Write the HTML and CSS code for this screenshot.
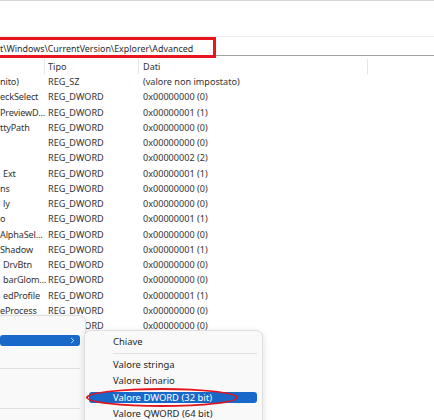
FILE: index.html
```html
<!DOCTYPE html>
<html lang="it">
<head>
<meta charset="utf-8">
<link rel="stylesheet" href="styles.css">
</head>
<body>
<div class="page">
  <div class="top"></div>
  <div class="addressbar">
    <div class="addr-box">t\Windows\CurrentVersion\Explorer\Advanced</div>
  </div>
  <div class="grid header">
    <div class="cell name"></div>
    <div class="cell">Tipo</div>
    <div class="cell data">Dati</div>
    <div class="cell"></div>
  </div>
  <div class="rows">
    <div class="grid row"><div class="cell name">nito)</div><div class="cell">REG_SZ</div><div class="cell data">(valore non impostato)</div></div>
    <div class="grid row"><div class="cell name">eckSelect</div><div class="cell">REG_DWORD</div><div class="cell data">0x00000000 (0)</div></div>
    <div class="grid row"><div class="cell name">PreviewD...</div><div class="cell">REG_DWORD</div><div class="cell data">0x00000001 (1)</div></div>
    <div class="grid row"><div class="cell name">ttyPath</div><div class="cell">REG_DWORD</div><div class="cell data">0x00000000 (0)</div></div>
    <div class="grid row"><div class="cell name"></div><div class="cell">REG_DWORD</div><div class="cell data">0x00000000 (0)</div></div>
    <div class="grid row"><div class="cell name"></div><div class="cell">REG_DWORD</div><div class="cell data">0x00000002 (2)</div></div>
    <div class="grid row"><div class="cell name shift">Ext</div><div class="cell">REG_DWORD</div><div class="cell data">0x00000001 (1)</div></div>
    <div class="grid row"><div class="cell name">ns</div><div class="cell">REG_DWORD</div><div class="cell data">0x00000000 (0)</div></div>
    <div class="grid row"><div class="cell name shift">ly</div><div class="cell">REG_DWORD</div><div class="cell data">0x00000000 (0)</div></div>
    <div class="grid row"><div class="cell name">o</div><div class="cell">REG_DWORD</div><div class="cell data">0x00000001 (1)</div></div>
    <div class="grid row"><div class="cell name">AlphaSel...</div><div class="cell">REG_DWORD</div><div class="cell data">0x00000000 (0)</div></div>
    <div class="grid row"><div class="cell name">Shadow</div><div class="cell">REG_DWORD</div><div class="cell data">0x00000001 (1)</div></div>
    <div class="grid row"><div class="cell name shift">DrvBtn</div><div class="cell">REG_DWORD</div><div class="cell data">0x00000000 (0)</div></div>
    <div class="grid row"><div class="cell name shift">barGlom...</div><div class="cell">REG_DWORD</div><div class="cell data">0x00000000 (0)</div></div>
    <div class="grid row"><div class="cell name shift">edProfile</div><div class="cell">REG_DWORD</div><div class="cell data">0x00000001 (1)</div></div>
    <div class="grid row"><div class="cell name">eProcess</div><div class="cell">REG_DWORD</div><div class="cell data">0x00000000 (0)</div></div>
    <div class="grid row"><div class="cell name"></div><div class="cell">REG_DWORD</div><div class="cell data">0x00000000 (0)</div></div>
  </div>

  <div class="menu parent">
    <div class="item"></div>
    <div class="item active">
      <svg class="chev" width="5" height="7" viewBox="0 0 5 7"><polyline points="1.2,1 3.8,3.5 1.2,6" fill="none" stroke="#dbe8f8" stroke-width="1"/></svg>
    </div>
    <div class="item"></div>
    <div class="sep"></div>
    <div class="item"></div>
    <div class="item"></div>
    <div class="sep sep2"></div>
    <div class="item"></div>
  </div>

  <div class="menu sub">
    <div class="item">Chiave</div>
    <div class="sep"></div>
    <div class="item">Valore stringa</div>
    <div class="item">Valore binario</div>
    <div class="item active">Valore DWORD (32 bit)</div>
    <div class="item">Valore QWORD (64 bit)</div>
  </div>

  <div class="ring"></div>
</div>
</body>
</html>
```
FILE: styles.css
```css
html, body {
  margin: 0;
  padding: 0;
  background: #ffffff;
  overflow: hidden;
}
.page {
  position: relative;
  width: 434px;
  height: 420px;
  overflow: hidden;
  font-family: "Noto Sans", "Open Sans", sans-serif;
  color: #333333;
}
.top {
  height: 36px;
  border-top: 1px solid #d6d6d6;
  box-sizing: border-box;
}
.addressbar {
  height: 20px;
  box-sizing: border-box;
  border-top: 1px solid #eeeeee;
  border-bottom: 1px solid #a2a2a2;
  display: flex;
  align-items: flex-start;
}
.addr-box {
  flex: none;
  margin-left: -8px;
  width: 224px;
  height: 21px;
  box-sizing: border-box;
  border: 3px solid #e8151e;
  padding: 1px 0 0 5px;
  font-size: 8.9px;
  line-height: 15px;
  white-space: nowrap;
  color: #2b2b2b;
}
.grid {
  display: grid;
  grid-template-columns: 45px 94px 229px 1fr;
}
.header {
  margin-top: 3px;
  height: 15px;
  font-size: 9.1px;
  line-height: 15px;
}
.header .cell {
  border-right: 1px solid #e6e6e6;
}
.header .cell:last-child {
  border-right: none;
}
.cell {
  padding-left: 3px;
  white-space: nowrap;
}
.cell.name {
  padding-left: 0;
  letter-spacing: -0.15px;
}
.cell.name.shift {
  padding-left: 3px;
}
.cell.data {
  padding-left: 4px;
}
.row {
  height: 15.27px;
  font-size: 9.1px;
  line-height: 15.27px;
}

/* context menus */
.menu {
  position: absolute;
  display: flex;
  flex-direction: column;
  box-sizing: border-box;
  background: #f9f9f9;
  border: 1px solid #dedede;
  border-radius: 7px;
  box-shadow: 0 2px 7px rgba(0, 0, 0, 0.13);
  font-size: 9.45px;
  color: #262626;
}
.menu .item {
  flex: none;
  height: 11px;
  line-height: 11px;
  margin: 2.7px 5px 2.7px 4px;
  padding-left: 24px;
  border-radius: 3px;
  white-space: nowrap;
  position: relative;
}
.menu .item.active {
  background: #1768c8;
  color: #ffffff;
}
.menu .sep {
  flex: none;
  height: 1px;
  background: #e0e0e0;
  margin: 2.8px 5px 2.4px 28px;
}
.parent {
  left: -12px;
  top: 315px;
  width: 98px;
  height: 130px;
}
.parent .item {
  margin-left: 11px;
  margin-right: 5px;
  padding-left: 0;
}
.parent .sep {
  margin-left: 11px;
  margin-right: 5px;
}
.parent .sep2 {
  margin-top: 3.8px;
}
.chev {
  position: absolute;
  right: 5px;
  top: 2px;
}
.sub {
  left: 84px;
  top: 330px;
  width: 179px;
  height: 120px;
  padding-top: 2.5px;
}
.ring {
  position: absolute;
  left: 86px;
  top: 388px;
  width: 152px;
  height: 19px;
  box-sizing: border-box;
  border: 2px solid #e3141c;
  border-radius: 50%;
}
```
